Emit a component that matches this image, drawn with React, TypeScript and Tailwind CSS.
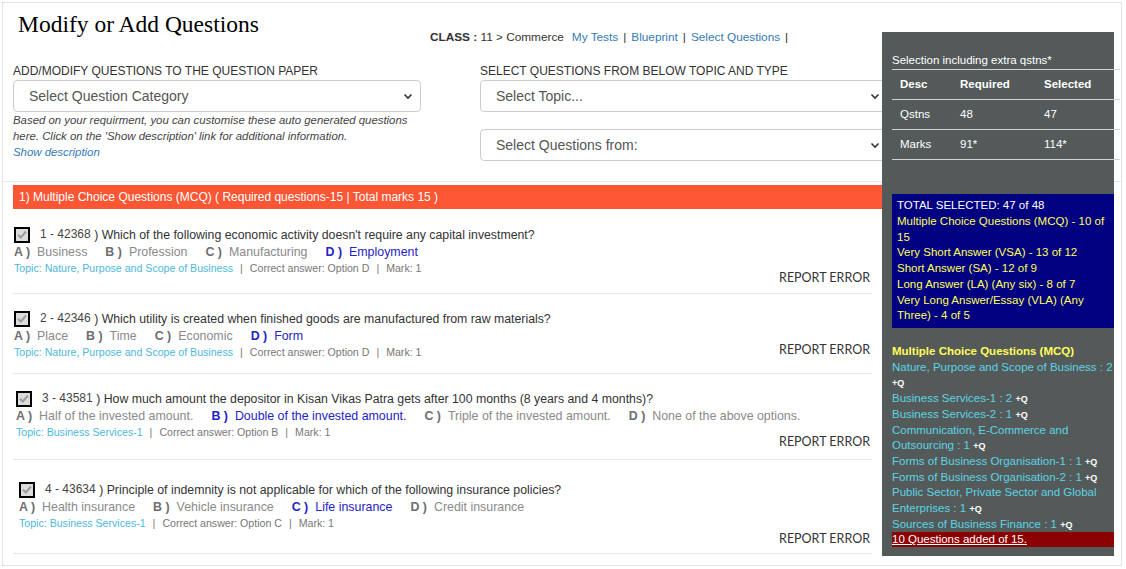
import React from "react";

type Question = {
  num: string;
  text: string;
  options: string[];
  correct: number;
  topic: string;
  answer: string;
  block: string;
  report: string;
};

const questions: Question[] = [
  {
    num: "1 - 42368",
    text: "Which of the following economic activity doesn't require any capital investment?",
    options: ["Business", "Profession", "Manufacturing", "Employment"],
    correct: 3,
    topic: "Nature, Purpose and Scope of Business",
    answer: "D",
    block: "pt-[17px] pb-[7px] pl-[1px]",
    report: "-mt-[6px]",
  },
  {
    num: "2 - 42346",
    text: "Which utility is created when finished goods are manufactured from raw materials?",
    options: ["Place", "Time", "Economic", "Form"],
    correct: 3,
    topic: "Nature, Purpose and Scope of Business",
    answer: "D",
    block: "pt-[16px] pb-[15px] pl-[1px]",
    report: "-mt-[18px]",
  },
  {
    num: "3 - 43581",
    text: "How much amount the depositor in Kisan Vikas Patra gets after 100 months (8 years and 4 months)?",
    options: [
      "Half of the invested amount.",
      "Double of the invested amount.",
      "Triple of the invested amount.",
      "None of the above options.",
    ],
    correct: 1,
    topic: "Business Services-1",
    answer: "B",
    block: "pt-[16px] pb-[9px] pl-[3px]",
    report: "-mt-[6px]",
  },
  {
    num: "4 - 43634",
    text: "Principle of indemnity is not applicable for which of the following insurance policies?",
    options: ["Health insurance", "Vehicle insurance", "Life insurance", "Credit insurance"],
    correct: 2,
    topic: "Business Services-1",
    answer: "C",
    block: "pt-[21px] pb-[6px] pl-[6px]",
    report: "mt-0",
  },
];

const letters = ["A", "B", "C", "D"];

const topicCounts: { label: string; count: string }[] = [
  { label: "Nature, Purpose and Scope of Business", count: "2" },
  { label: "Business Services-1", count: "2" },
  { label: "Business Services-2", count: "1" },
  { label: "Communication, E-Commerce and Outsourcing", count: "1" },
  { label: "Forms of Business Organisation-1", count: "1" },
  { label: "Forms of Business Organisation-2", count: "1" },
  { label: "Public Sector, Private Sector and Global Enterprises", count: "1" },
  { label: "Sources of Business Finance", count: "1" },
];

function FakeSelect({ label }: { label: string }) {
  return (
    <div className="flex h-[32px] w-[408px] items-center justify-between rounded-[4px] border border-[#cccccc] bg-white pl-[15px] pr-[7px] text-[14px] text-[#555555]">
      <span>{label}</span>
      <svg width="10" height="7" viewBox="0 0 10 7" fill="none">
        <path d="M1.5 1.5L5 5l3.5-3.5" stroke="#333333" strokeWidth="1.6" />
      </svg>
    </div>
  );
}

function CheckBox() {
  return (
    <span className="flex h-[16px] w-[16px] shrink-0 items-center justify-center border-2 border-black bg-[#dcdcdc]">
      <svg width="10" height="9" viewBox="0 0 10 9" fill="none">
        <path d="M1 4.8l2.8 2.7L9 1.5" stroke="#9c9c9c" strokeWidth="2" />
      </svg>
    </span>
  );
}

function QuestionBlock({ q }: { q: Question }) {
  return (
    <div className={`border-b border-[#e8e8e8] ${q.block}`}>
      <div className="flex h-[17px] items-center">
        <CheckBox />
        <span className="ml-[10px] whitespace-nowrap text-[12.3px] text-[#333333]">
          <span className="align-[1px] text-[12px] text-[#444444]">{q.num}</span> ) {q.text}
        </span>
      </div>
      <div className="flex h-[18px] items-center whitespace-nowrap text-[12.4px]">
        {q.options.map((opt, i) => (
          <span key={i} className="mr-[18px] flex">
            <span
              className={
                i === q.correct
                  ? "font-bold text-[#2323c8]"
                  : "font-bold text-[#6e6e6e]"
              }
            >
              {letters[i]} )
            </span>
            <span
              className={
                i === q.correct ? "ml-[7px] text-[#2323c8]" : "ml-[7px] text-[#8a8a8a]"
              }
            >
              {opt}
            </span>
          </span>
        ))}
      </div>
      <div className="flex h-[15px] items-center whitespace-nowrap text-[10.6px] text-[#777777]">
        <span className="text-[#4db8dc]">Topic: {q.topic}</span>
        <span className="mx-[7px]">|</span>
        <span>Correct answer: Option {q.answer}</span>
        <span className="mx-[7px]">|</span>
        <span>Mark: 1</span>
      </div>
      <div className={`flex h-[16px] items-center justify-end pr-[2px] ${q.report}`}>
        <span className="font-['Lato',sans-serif] text-[12.5px] text-[#333333]">REPORT ERROR</span>
      </div>
    </div>
  );
}

function SidePanel() {
  return (
    <div className="absolute left-[879px] top-[29px] h-[524px] w-[232px] bg-[#545a5a] pl-[10px] pt-[20px] text-[11.5px] text-white">
      <div className="h-[17px] leading-[16px]">Selection including extra qstns*</div>
      <div className="w-[228px] border-b border-[#cfd2d2]">
        <div className="grid h-[30px] grid-cols-[68px_84px_1fr] items-center border-t border-[#cfd2d2] font-bold">
          <span className="pl-[8px]">Desc</span>
          <span>Required</span>
          <span>Selected</span>
        </div>
        <div className="grid h-[30px] grid-cols-[68px_84px_1fr] items-center border-t border-[#cfd2d2]">
          <span className="pl-[8px]">Qstns</span>
          <span>48</span>
          <span>47</span>
        </div>
        <div className="grid h-[30px] grid-cols-[68px_84px_1fr] items-center border-t border-[#cfd2d2]">
          <span className="pl-[8px]">Marks</span>
          <span>91*</span>
          <span>114*</span>
        </div>
      </div>

      <div className="mt-[34px] bg-[#000080] px-[5px] py-[4px] leading-[15.75px] text-[#ffff5a]">
        <div className="text-white">TOTAL SELECTED: 47 of 48</div>
        <div>Multiple Choice Questions (MCQ) - 10 of 15</div>
        <div>Very Short Answer (VSA) - 13 of 12</div>
        <div>Short Answer (SA) - 12 of 9</div>
        <div>Long Answer (LA) (Any six) - 8 of 7</div>
        <div>Very Long Answer/Essay (VLA) (Any Three) - 4 of 5</div>
      </div>

      <div className="mt-[16px] leading-[15.7px]">
        <div className="font-bold text-[#ffff5a]">Multiple Choice Questions (MCQ)</div>
        {topicCounts.map((t) => (
          <div key={t.label} className="text-[#5cd3e3]">
            {t.label} : {t.count}{" "}
            <span className="text-[9px] font-bold leading-none text-white">+Q</span>
          </div>
        ))}
        <div className="h-[15px] bg-[#8b0000] leading-[15px]">
          <span className="underline">10 Questions added of 15.</span>
        </div>
      </div>
    </div>
  );
}

export default function App() {
  return (
    <div className="h-[569px] w-[1126px] bg-white p-[2px] font-['Liberation_Sans',Arial,sans-serif]">
      <div className="relative h-[564px] w-[1120px] overflow-hidden border border-[#e2e2e2]">
        <div className="flex h-[61px]">
          <h1 className="w-[427px] pl-[15px] pt-[6px] font-['Liberation_Serif','Times_New_Roman',serif] text-[23.5px] leading-[30px] text-black">
            Modify or Add Questions
          </h1>
          <div className="pt-[26px] text-[11.8px] leading-[16px] text-[#333333]">
            <span className="font-bold">CLASS :</span> 11 &gt; Commerce
            <span className="ml-[8px] text-[#337ab7]">My Tests</span>
            <span className="mx-[5px]">|</span>
            <span className="text-[#337ab7]">Blueprint</span>
            <span className="mx-[5px]">|</span>
            <span className="text-[#337ab7]">Select Questions</span>
            <span className="mx-[5px]">|</span>
          </div>
        </div>

        <div className="flex gap-[59px] px-[10px]">
          <div className="w-[408px]">
            <div className="h-[15px] text-[12px] leading-[15px] text-[#333333]">
              ADD/MODIFY QUESTIONS TO THE QUESTION PAPER
            </div>
            <div className="mt-[1px]">
              <FakeSelect label="Select Question Category" />
            </div>
            <p className="w-[414px] text-[11.4px] italic leading-[16px] text-[#444444]">
              Based on your requirment, you can customise these auto generated questions here.
              Click on the 'Show description' link for additional information.
            </p>
            <p className="text-[11.4px] italic leading-[16px] text-[#337ab7]">Show description</p>
          </div>
          <div className="w-[408px]">
            <div className="h-[15px] text-[12px] leading-[15px] text-[#333333]">
              SELECT QUESTIONS FROM BELOW TOPIC AND TYPE
            </div>
            <div className="mt-[1px]">
              <FakeSelect label="Select Topic..." />
            </div>
            <div className="mt-[17px]">
              <FakeSelect label="Select Questions from:" />
            </div>
          </div>
        </div>

        <div className="mt-[20px] border-t border-[#e8e8e8]" />

        <div className="mt-[3px] px-[10px]">
          <div className="flex h-[24px] w-[880px] items-center bg-[#fd5634] pl-[6px] text-[12px] text-white">
            1) Multiple Choice Questions (MCQ) ( Required questions-15 | Total marks 15 )
          </div>
          <div className="w-[859px]">
            {questions.map((q) => (
              <QuestionBlock key={q.num} q={q} />
            ))}
          </div>
        </div>

        <SidePanel />
      </div>
    </div>
  );
}
